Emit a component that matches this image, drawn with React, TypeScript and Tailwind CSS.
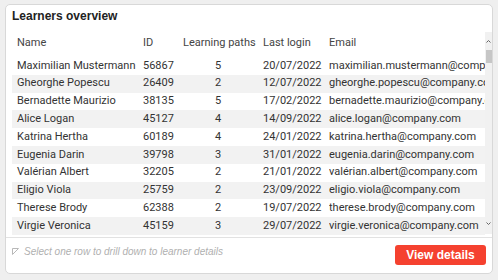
import React from "react";

const rows = [
  ["Maximilian Mustermann", "56867", "5", "20/07/2022", "maximilian.mustermann@company.com"],
  ["Gheorghe Popescu", "26409", "2", "12/07/2022", "gheorghe.popescu@company.com"],
  ["Bernadette Maurizio", "38135", "5", "17/02/2022", "bernadette.maurizio@company.com"],
  ["Alice Logan", "45127", "4", "14/09/2022", "alice.logan@company.com"],
  ["Katrina Hertha", "60189", "4", "24/01/2022", "katrina.hertha@company.com"],
  ["Eugenia Darin", "39798", "3", "31/01/2022", "eugenia.darin@company.com"],
  ["Valérian Albert", "32205", "2", "21/01/2022", "valérian.albert@company.com"],
  ["Eligio Viola", "25759", "2", "23/09/2022", "eligio.viola@company.com"],
  ["Therese Brody", "62388", "2", "19/07/2022", "therese.brody@company.com"],
  ["Virgie Veronica", "45159", "3", "29/07/2022", "virgie.veronica@company.com"],
];

export default function App() {
  return (
    <div className="w-[498px] h-[280px] bg-[#efefef] pl-[5px] pt-[4px] overflow-hidden">
      <div className="w-[488px] h-[270px] bg-white border border-[#d8d8d8] rounded-[5px] flex flex-col">
        <div className="pl-[6px] pt-[3px] h-[19px] leading-[16px] text-[12px] font-bold text-[#222] font-['Liberation_Sans',Arial,sans-serif]">
          Learners overview
        </div>
        <div className="mt-[8px] flex h-[205px]">
          <div className="flex-1 min-w-0 pl-[6px] pt-[1px] font-['Roboto',sans-serif] text-[11px] text-[#333] overflow-hidden">
            <div className="grid grid-cols-[126px_40px_80px_66px_1fr] h-[20px] items-center pl-[5px] text-[#444] whitespace-nowrap">
              <div>Name</div>
              <div>ID</div>
              <div className="pr-[8px] text-center">Learning paths</div>
              <div>Last login</div>
              <div>Email</div>
            </div>
            <div className="mt-[4px]">
              {rows.map((r, i) => (
                <div
                  key={i}
                  className={
                    "grid grid-cols-[126px_40px_80px_66px_1fr] h-[17.8px] items-center pl-[5px] whitespace-nowrap " +
                    (i % 2 === 1 ? "bg-[#f2f2f2]" : "bg-white")
                  }
                >
                  <div>{r[0]}</div>
                  <div>{r[1]}</div>
                  <div className="pr-[10px] text-center">{r[2]}</div>
                  <div>{r[3]}</div>
                  <div className="overflow-hidden">{r[4]}</div>
                </div>
              ))}
            </div>
          </div>
          <div className="w-[7px] mb-[3px] bg-[#f1f1f1] flex flex-col items-center">
            <svg width="7" height="5" viewBox="0 0 7 5" className="mt-[7px]">
              <path d="M1.5 3.5 L3.5 1.5 L5.5 3.5" stroke="#666" strokeWidth="1" fill="none" />
            </svg>
            <div className="mt-[6px] w-[6px] h-[13px] bg-[#c6c6c6]" />
            <div className="flex-1" />
            <svg width="7" height="5" viewBox="0 0 7 5" className="mb-[8px]">
              <path d="M1.5 1.5 L3.5 3.5 L5.5 1.5" stroke="#666" strokeWidth="1" fill="none" />
            </svg>
          </div>
        </div>
        <div className="h-px bg-[#e2e2e2]" />
        <div className="flex items-start justify-between pt-[7px] pl-[6px] pr-[6px]">
          <div className="flex items-center h-[12px] text-[10px] italic text-[#b0b0b0] font-['Liberation_Sans',Arial,sans-serif]">
            <svg width="7" height="7" viewBox="0 0 7 7" className="mr-[5px]">
              <path d="M0.5 0.5 H6.5 L0.5 6.5 Z" stroke="#b8b8b8" strokeWidth="1" fill="none" />
              <path d="M2 5 L6 1" stroke="#b8b8b8" strokeWidth="1" />
            </svg>
            Select one row to drill down to learner details
          </div>
          <button className="w-[91px] h-[20px] rounded-[3px] bg-[#f5412f] text-white text-[12px] font-bold font-['Liberation_Sans',Arial,sans-serif] leading-[20px]">
            View details
          </button>
        </div>
      </div>
    </div>
  );
}
